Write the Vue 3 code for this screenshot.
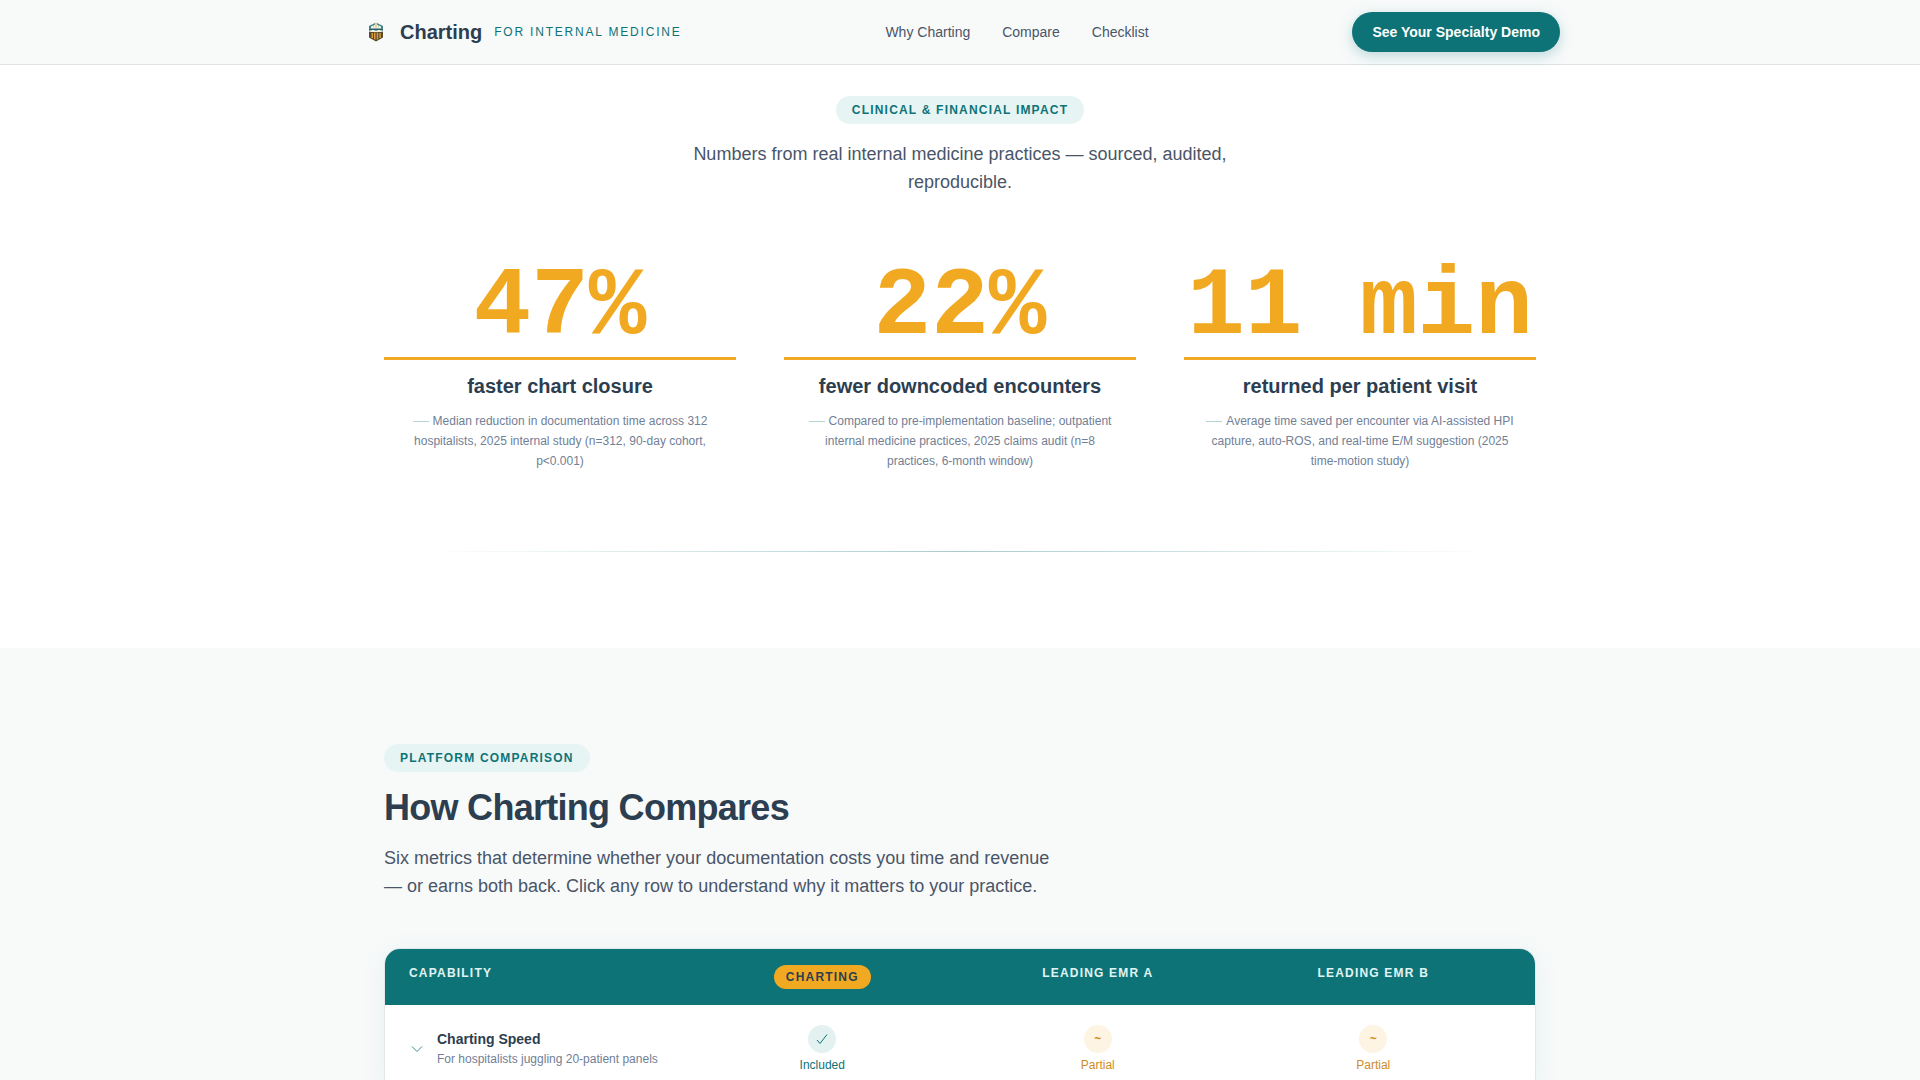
<script setup>
const links = ['Why Charting', 'Compare', 'Checklist']

const stats = [
  {
    value: '47%',
    title: 'faster chart closure',
    source: 'Median reduction in documentation time across 312 hospitalists, 2025 internal study (n=312, 90-day cohort, p<0.001)'
  },
  {
    value: '22%',
    title: 'fewer downcoded encounters',
    source: 'Compared to pre-implementation baseline; outpatient internal medicine practices, 2025 claims audit (n=8 practices, 6-month window)'
  },
  {
    value: '11 min',
    title: 'returned per patient visit',
    source: 'Average time saved per encounter via AI-assisted HPI capture, auto-ROS, and real-time E/M suggestion (2025 time-motion study)'
  }
]

const rows = [
  {
    name: 'Charting Speed',
    audience: 'For hospitalists juggling 20-patient panels',
    cells: ['Included', 'Partial', 'Partial']
  }
]
</script>

<template>
  <div class="page">
    <header class="nav">
      <div class="nav-inner">
        <a class="brand" href="#top">
          <svg class="logo" viewBox="0 0 32 32" aria-hidden="true">
            <path d="M16 6.500 23 10V21.500L16 25.500 9 21.500V10Z" fill="#f6f2e2" />
            <path d="M9 12.500V10L15 7v1.500L11 10.500V12.500ZM23 12.500V10L17 7v1.500L21 10.500V12.500Z" fill="#3f7f86" />
            <path d="M15.300 6.500h1.400v5h-1.400z" fill="#d8c48a" />
            <path d="M13 9.500h1v1h-1zM18 9.500h1v1h-1z" fill="#7d9c98" />
            <path d="M9 12.500h14v2h-2l-1-.500h-2l-1 .500h-2l-1-.500h-2l-1 .500H9z" fill="#22606a" />
            <path d="M9 15.500 11 16h10l2-.500V21.500L16 25.500 9 21.500Z" fill="#59492e" />
            <path d="M11.500 17H13v5h-1.500zM14 16.500h1.500v7H14zM16.700 16.500h1.500v7h-1.500zM19.300 17h1.500v5h-1.500z" fill="#d89b38" />
          </svg>
          <span class="brand-name">Charting</span>
          <span class="brand-tag">For Internal Medicine</span>
        </a>
        <nav class="links" aria-label="Main">
          <a v-for="link in links" :key="link" href="#compare">{{ link }}</a>
        </nav>
        <button class="cta" type="button">See Your Specialty Demo</button>
      </div>
    </header>

    <main>
      <section id="top" class="impact">
        <div class="container">
          <div class="intro">
            <span class="badge">Clinical &amp; Financial Impact</span>
            <p class="lead">Numbers from real internal medicine practices — sourced, audited, reproducible.</p>
          </div>
          <div class="stats">
            <article v-for="stat in stats" :key="stat.value" class="stat">
              <div class="value">{{ stat.value }}</div>
              <h3>{{ stat.title }}</h3>
              <p class="source">{{ stat.source }}</p>
            </article>
          </div>
          <hr class="divider" />
        </div>
      </section>

      <section id="compare" class="compare">
        <div class="container">
          <span class="badge">Platform Comparison</span>
          <h2>How Charting Compares</h2>
          <p class="lead">Six metrics that determine whether your documentation costs you time and revenue — or earns both back. Click any row to understand why it matters to your practice.</p>
          <table class="table">
            <thead>
              <tr>
                <th scope="col">Capability</th>
                <th scope="col"><span class="pill">Charting</span></th>
                <th scope="col">Leading EMR A</th>
                <th scope="col">Leading EMR B</th>
              </tr>
            </thead>
            <tbody>
              <tr v-for="row in rows" :key="row.name">
                <th scope="row" class="capability">
                  <svg class="chevron" viewBox="0 0 16 16" aria-hidden="true">
                    <path d="M3 5.500 8 10.500 13 5.500" />
                  </svg>
                  <span>
                    <span class="name">{{ row.name }}</span>
                    <span class="audience">{{ row.audience }}</span>
                  </span>
                </th>
                <td v-for="(cell, i) in row.cells" :key="i">
                  <div class="status" :class="cell.toLowerCase()">
                    <span class="mark">
                      <svg v-if="cell === 'Included'" viewBox="0 0 14 14" aria-hidden="true">
                        <path d="M2 8 5 11.500 12 2.500" />
                      </svg>
                      <template v-else>~</template>
                    </span>
                    <span>{{ cell }}</span>
                  </div>
                </td>
              </tr>
            </tbody>
          </table>
        </div>
      </section>
    </main>
  </div>
</template>

<style>
body {
  margin: 0;
}
</style>

<style scoped>
.page {
  background: #fff;
  color: #4a5568;
  font-family: "Liberation Sans", Arial, sans-serif;
}

.nav {
  position: sticky;
  top: 0;
  z-index: 10;
  background: #f8fafa;
  box-shadow: 0 1px 0 #e0e3e3;
}

.nav-inner {
  display: flex;
  align-items: center;
  justify-content: space-between;
  max-width: 1200px;
  height: 64px;
  margin: 0 auto;
}

.brand {
  display: flex;
  align-items: center;
  color: #2c3e50;
  text-decoration: none;
}

.logo {
  width: 32px;
  height: 32px;
  margin-right: 8px;
}

.brand-name {
  margin-right: 12px;
  font-size: 20px;
  font-weight: 700;
}

.brand-tag {
  color: #0d7377;
  font-size: 12px;
  letter-spacing: 0.15em;
  text-transform: uppercase;
}

.links {
  display: flex;
  gap: 32px;
}

.links a {
  color: #4a5568;
  font-size: 14px;
  text-decoration: none;
}

.cta {
  height: 40px;
  padding: 0 20px;
  border: 0;
  border-radius: 20px;
  background: #0d7377;
  box-shadow: 0 4px 14px rgba(13, 115, 119, 0.25);
  color: #fff;
  font: 700 14px "Liberation Sans", Arial, sans-serif;
}

.container {
  max-width: 1152px;
  margin: 0 auto;
}

.impact {
  padding: 32px 0 96px;
}

.intro {
  display: flex;
  flex-direction: column;
  align-items: center;
  text-align: center;
}

.intro .lead {
  max-width: 560px;
}

.badge {
  display: inline-block;
  padding: 0 16px;
  border-radius: 14px;
  background: #e7f4f4;
  color: #0d7377;
  font-size: 12px;
  font-weight: 700;
  line-height: 28px;
  letter-spacing: 0.1em;
  text-transform: uppercase;
}

.lead {
  max-width: 680px;
  margin: 16px 0 0;
  font-size: 18px;
  line-height: 28px;
}

.stats {
  display: grid;
  grid-template-columns: repeat(3, 1fr);
  gap: 48px;
  margin-top: 64px;
}

.stat {
  text-align: center;
}

.value {
  padding-bottom: 1px;
  border-bottom: 3px solid #f2a922;
  color: #f2a922;
  font-family: "Liberation Mono", "Courier New", monospace;
  font-size: 96px;
  font-weight: 700;
  line-height: 96px;
  white-space: nowrap;
}

.stat h3 {
  margin: 12px 0 11px;
  color: #2c3e50;
  font-size: 20px;
  line-height: 28px;
}

.source {
  max-width: 312px;
  margin: 0 auto;
  color: #718096;
  font-size: 12px;
  line-height: 20px;
}

.source::before {
  content: "";
  display: inline-block;
  width: 16px;
  height: 1px;
  margin-right: 4px;
  background: #b4d3d5;
  vertical-align: middle;
}

.divider {
  height: 1px;
  margin: 80px 0 0;
  border: 0;
  background: linear-gradient(90deg, transparent 4%, #a9cccd 50%, transparent 96%);
}

.compare {
  padding: 96px 0;
  background: #f8fafa;
}

h2 {
  margin: 14px 0;
  color: #2c3e50;
  font-size: 36px;
  line-height: 44px;
  letter-spacing: -0.02em;
}

.compare .lead {
  margin: 0;
}

.table {
  display: block;
  overflow: hidden;
  margin-top: 48px;
  border: 1px solid #e2e8e8;
  border-radius: 16px;
  background: #fff;
  box-shadow: 0 4px 24px rgba(13, 115, 119, 0.08);
}

thead,
tbody {
  display: block;
}

tr {
  display: grid;
  grid-template-columns: repeat(4, 1fr);
  padding: 16px 24px;
}

tbody tr {
  padding: 20px 24px;
}

th,
td {
  padding: 0;
  text-align: center;
}

th:first-child {
  text-align: left;
}

thead {
  background: #0d7377;
  color: #e0f4f4;
  font-size: 12px;
  line-height: 16px;
  letter-spacing: 0.1em;
  text-transform: uppercase;
}

.pill {
  display: inline-block;
  padding: 4px 12px;
  border-radius: 12px;
  background: #f2a922;
  color: #2c3e50;
}

.capability {
  display: flex;
  align-items: center;
  gap: 12px;
  font-weight: 400;
}

.chevron {
  flex: none;
  width: 16px;
  height: 16px;
  fill: none;
  stroke: #3d8f92;
}

.name,
.audience {
  display: block;
  font-size: 12px;
  line-height: 20px;
}

.name {
  color: #2c3e50;
  font-size: 14px;
  font-weight: 700;
}

.audience {
  color: #718096;
}

.status {
  display: flex;
  flex-direction: column;
  align-items: center;
  gap: 4px;
  color: #0d7377;
  font-size: 12px;
  line-height: 16px;
}

.mark {
  display: grid;
  place-items: center;
  width: 28px;
  height: 28px;
  border-radius: 50%;
  background: #e3f2f1;
  font-weight: 700;
}

.mark svg {
  width: 14px;
  height: 14px;
  fill: none;
  stroke: #0d7377;
}

.partial {
  color: #d08c22;
}

.partial .mark {
  background: #fef4e3;
}
</style>
